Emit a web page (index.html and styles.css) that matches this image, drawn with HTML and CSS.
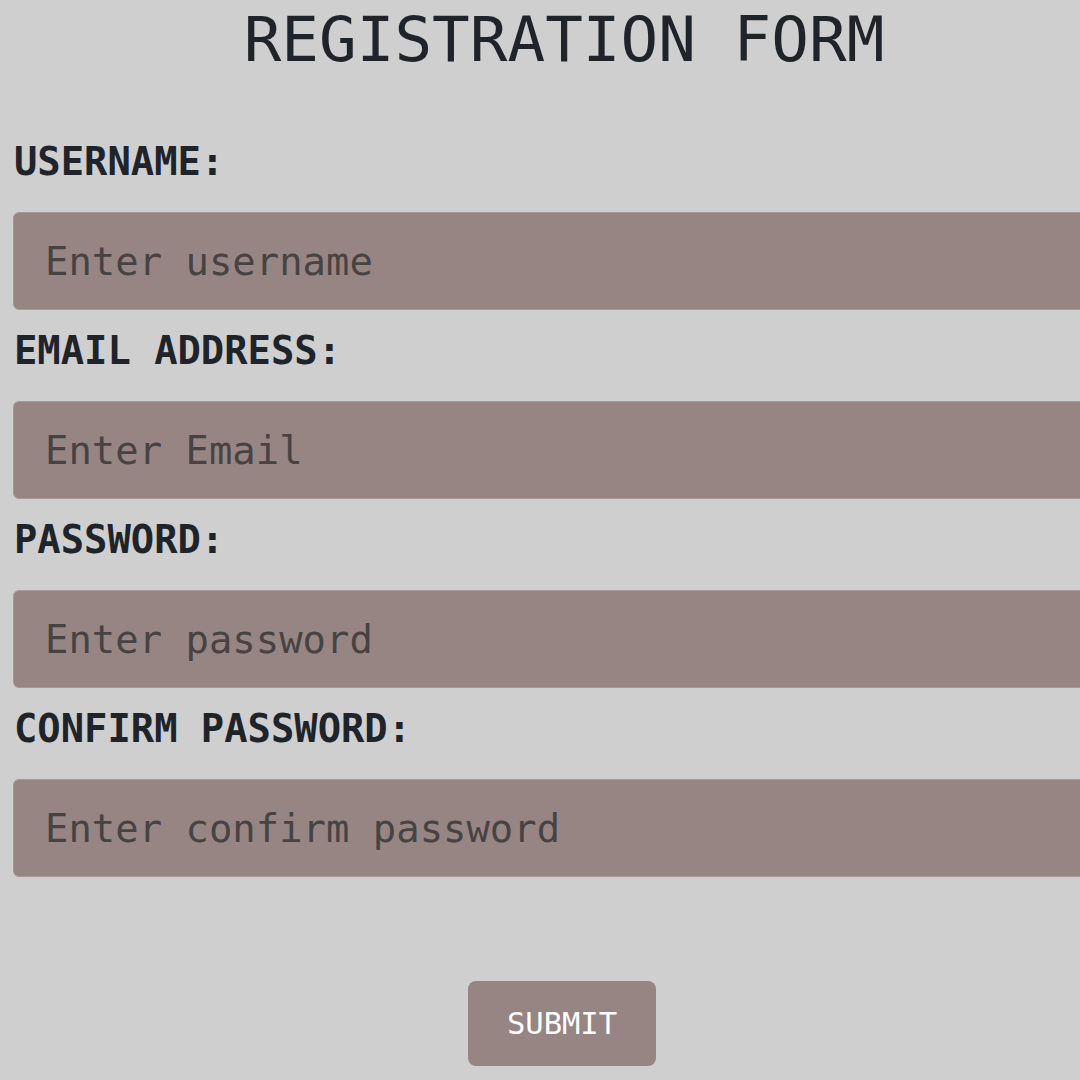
FILE: index.html
```html
<!DOCTYPE html>
<html lang="en">
<head>
<meta charset="utf-8">
<title>Registration Form</title>
<link rel="stylesheet" href="styles.css">
</head>
<body>
<div class="page">
  <h1 class="title">REGISTRATION FORM</h1>
  <form class="form">
    <div class="field">
      <label class="label" for="username">USERNAME:</label>
      <input class="input" id="username" type="text" placeholder="Enter username">
    </div>
    <div class="field">
      <label class="label" for="email">EMAIL ADDRESS:</label>
      <input class="input" id="email" type="email" placeholder="Enter Email">
    </div>
    <div class="field">
      <label class="label" for="password">PASSWORD:</label>
      <input class="input" id="password" type="password" placeholder="Enter password">
    </div>
    <div class="field">
      <label class="label" for="confirm">CONFIRM PASSWORD:</label>
      <input class="input" id="confirm" type="password" placeholder="Enter confirm password">
    </div>
    <div class="actions">
      <button class="submit" type="button">SUBMIT</button>
    </div>
  </form>
</div>
</body>
</html>
```
FILE: styles.css
```css
html, body {
  overflow: hidden;
}
body {
  margin: 0;
  width: 1080px;
  height: 1080px;
  background: #cfcfcf;
  font-family: "DejaVu Sans Mono", "Liberation Mono", monospace;
  color: #1f232a;
}
.page {
  width: 1112px;
  margin-left: 8px;
  padding-top: 4px;
}
.title {
  margin: 0;
  text-align: center;
  font-size: 62.6px;
  font-weight: normal;
  line-height: 72px;
  color: #1f232a;
}
.form {
  margin-top: 63px;
  padding: 0 5px;
}
.field {
  display: flex;
  flex-direction: column;
  margin-bottom: 18px;
}
.label {
  display: block;
  font-size: 38.8px;
  line-height: 46px;
  font-weight: bold;
  color: #1f232a;
  padding-left: 1px;
  margin-bottom: 27px;
}
.input {
  box-sizing: border-box;
  width: 100%;
  height: 98px;
  margin: 0;
  padding: 0 0 0 31px;
  border: 1px solid #a59a99;
  border-radius: 6px;
  background: #978584;
  font-family: "DejaVu Sans Mono", "Liberation Mono", monospace;
  font-size: 38.9px;
  color: #2a2a2a;
  outline: none;
}
.input::placeholder {
  color: #474343;
  opacity: 1;
}
.actions {
  display: flex;
  justify-content: center;
  padding-top: 86px;
  padding-right: 4px;
}
.submit {
  width: 188px;
  height: 85px;
  border: none;
  border-radius: 8px;
  background: #978584;
  color: #ffffff;
  font-family: "DejaVu Sans Mono", "Liberation Mono", monospace;
  font-size: 30.5px;
  padding: 0;
  cursor: pointer;
}
```
